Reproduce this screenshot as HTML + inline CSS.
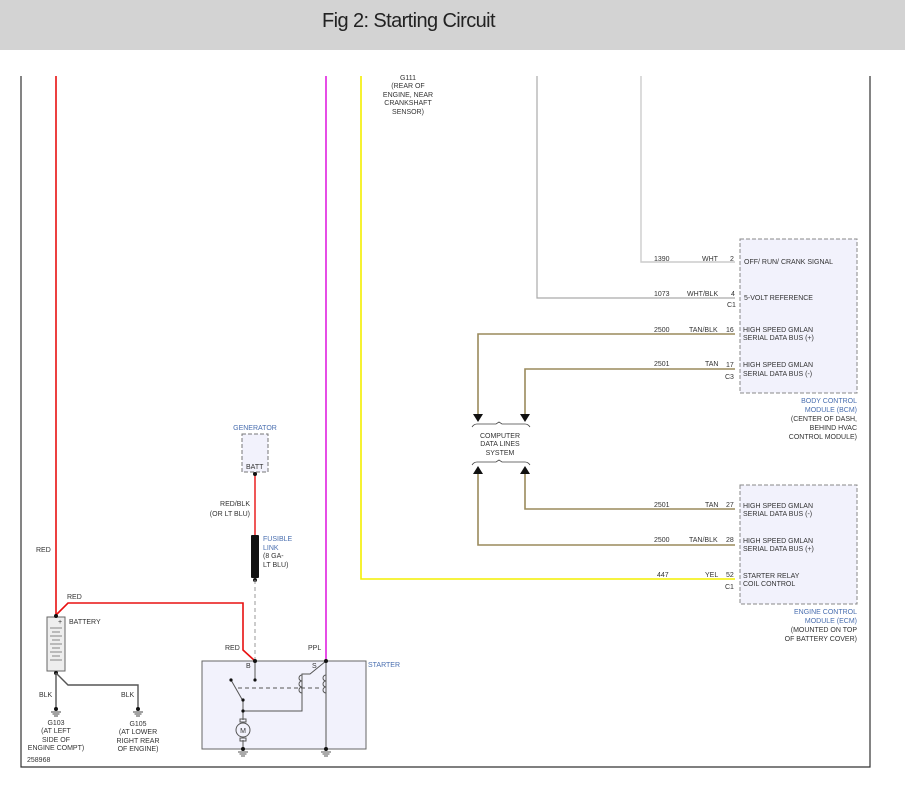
<!DOCTYPE html>
<html><head><meta charset="utf-8"><style>
html,body{margin:0;padding:0;background:#fff;width:905px;height:789px;overflow:hidden}
.hdr{position:absolute;left:0;top:0;width:905px;height:50px;background:#d3d3d3}
.hdr span{position:absolute;left:322px;top:10px;font:20px "Liberation Sans",sans-serif;color:#222;letter-spacing:-0.6px}
svg{position:absolute;left:0;top:0}
text{font-family:"Liberation Sans",sans-serif;font-size:7px;fill:#333}
.b{fill:#4a6fb0}
</style></head><body>
<div class="hdr"><span>Fig 2: Starting Circuit</span></div>
<svg width="905" height="789" viewBox="0 0 905 789">
<path d="M21 76V767H870V76" fill="none" stroke="#333" stroke-width="1.2"/>
<path d="M56 76V617" stroke="#e81010" stroke-width="1.6" fill="none"/>
<path d="M326 76V661" stroke="#e020e0" stroke-width="1.6" fill="none"/>
<path d="M361 76V579H735" stroke="#f4ef00" stroke-width="1.6" fill="none"/>
<path d="M641 76V262H735" stroke="#ccc" stroke-width="1.4" fill="none"/>
<path d="M537 76V298H735" stroke="#aaa" stroke-width="1.2" fill="none"/>
<path d="M478 420V334H735M525 420V369H735M525 468V509H735M478 468V545H735" stroke="#9a8a5c" stroke-width="1.6" fill="none"/>
<path d="M473 414h10l-5 8zM520 414h10l-5 8zM473 474h10l-5-8zM520 474h10l-5-8z" fill="#111"/>
<path d="M472 427q2-3 5-3h19l3-2 3 2h23q3 0 5 3M472 465q2-3 5-3h19l3-2 3 2h23q3 0 5 3" stroke="#444" fill="none" stroke-width="0.8"/>
<text x="500" y="438" text-anchor="middle">COMPUTER</text>
<text x="500" y="446" text-anchor="middle">DATA LINES</text>
<text x="500" y="455" text-anchor="middle">SYSTEM</text>
<g text-anchor="middle"><text x="408" y="80">G111</text><text x="408" y="88">(REAR OF</text><text x="408" y="97">ENGINE, NEAR</text><text x="408" y="105">CRANKSHAFT</text><text x="408" y="114">SENSOR)</text></g>
<rect x="740" y="239" width="117" height="154" fill="#f2f2fc" stroke="#888" stroke-dasharray="4 2"/>
<rect x="740" y="485" width="117" height="119" fill="#f2f2fc" stroke="#888" stroke-dasharray="4 2"/>
<g>
<text x="654" y="261">1390</text><text x="702" y="261">WHT</text><text x="730" y="261">2</text><text x="744" y="264">OFF/ RUN/ CRANK SIGNAL</text>
<text x="654" y="296">1073</text><text x="687" y="296">WHT/BLK</text><text x="731" y="296">4</text><text x="727" y="307">C1</text><text x="744" y="300">5-VOLT REFERENCE</text>
<text x="654" y="332">2500</text><text x="689" y="332">TAN/BLK</text><text x="726" y="332">16</text><text x="743" y="332">HIGH SPEED GMLAN</text><text x="743" y="340">SERIAL DATA BUS (+)</text>
<text x="654" y="366">2501</text><text x="705" y="366">TAN</text><text x="726" y="367">17</text><text x="725" y="379">C3</text><text x="743" y="367">HIGH SPEED GMLAN</text><text x="743" y="376">SERIAL DATA BUS (-)</text>
<text x="654" y="507">2501</text><text x="705" y="507">TAN</text><text x="726" y="507">27</text><text x="743" y="508">HIGH SPEED GMLAN</text><text x="743" y="516">SERIAL DATA BUS (-)</text>
<text x="654" y="542">2500</text><text x="689" y="542">TAN/BLK</text><text x="726" y="542">28</text><text x="743" y="543">HIGH SPEED GMLAN</text><text x="743" y="551">SERIAL DATA BUS (+)</text>
<text x="657" y="577">447</text><text x="705" y="577">YEL</text><text x="726" y="577">52</text><text x="725" y="589">C1</text><text x="743" y="578">STARTER RELAY</text><text x="743" y="586">COIL CONTROL</text>
</g>
<g text-anchor="end">
<text x="857" y="403" class="b">BODY CONTROL</text><text x="857" y="412" class="b">MODULE (BCM)</text><text x="857" y="421">(CENTER OF DASH,</text><text x="857" y="430">BEHIND HVAC</text><text x="857" y="439">CONTROL MODULE)</text>
<text x="857" y="614" class="b">ENGINE CONTROL</text><text x="857" y="623" class="b">MODULE (ECM)</text><text x="857" y="632">(MOUNTED ON TOP</text><text x="857" y="641">OF BATTERY COVER)</text>
</g>
<text x="255" y="430" text-anchor="middle" class="b">GENERATOR</text>
<rect x="242" y="434" width="26" height="38" fill="#f2f2fc" stroke="#777" stroke-dasharray="4 2"/>
<text x="246" y="469">BATT</text>
<path d="M255 474V535" stroke="#e81010" stroke-width="1.4"/>
<circle cx="255" cy="474" r="2" fill="#111"/>
<text x="250" y="506" text-anchor="end">RED/BLK</text><text x="250" y="516" text-anchor="end">(OR LT BLU)</text>
<rect x="251" y="535" width="8" height="43" fill="#111" rx="1"/>
<circle cx="255" cy="580" r="2" fill="#111"/>
<text x="263" y="541" class="b">FUSIBLE</text><text x="263" y="550" class="b">LINK</text><text x="263" y="558">(8 GA-</text><text x="263" y="567">LT BLU)</text>
<path d="M255 580V661" stroke="#999" stroke-dasharray="4 3"/>
<text x="36" y="552">RED</text>
<path d="M56 615L68 603H243V650L255 661" stroke="#e81010" stroke-width="1.6" fill="none"/>
<text x="67" y="599">RED</text>
<rect x="47" y="617" width="18" height="54" fill="#eee" stroke="#666"/>
<path d="M50 628h12M52 632h8M50 636h12M52 640h8M50 644h12M52 648h8M50 652h12M52 656h8M50 660h12" stroke="#666" stroke-width="0.8"/>
<text x="58" y="624" font-size="6">+</text>
<text x="69" y="624">BATTERY</text>
<circle cx="56" cy="616" r="2" fill="#111"/><circle cx="56" cy="673" r="2" fill="#111"/>
<path d="M56 673V708M56 673L68 685H138V708" stroke="#555" stroke-width="1.4" fill="none"/>
<text x="39" y="697">BLK</text><text x="121" y="697">BLK</text>
<g stroke="#444"><path d="M51 712h10M52.5 714h7M54 716h4M133 712h10M134.5 714h7M136 716h4"/></g>
<circle cx="56" cy="709" r="2" fill="#111"/><circle cx="138" cy="709" r="2" fill="#111"/>
<g text-anchor="middle"><text x="56" y="725">G103</text><text x="56" y="733">(AT LEFT</text><text x="56" y="742">SIDE OF</text><text x="56" y="750">ENGINE COMPT)</text>
<text x="138" y="726">G105</text><text x="138" y="734">(AT LOWER</text><text x="138" y="743">RIGHT REAR</text><text x="138" y="751">OF ENGINE)</text></g>
<text x="27" y="762">258968</text>
<text x="225" y="650">RED</text><text x="308" y="650">PPL</text><text x="368" y="667" class="b">STARTER</text>
<rect x="202" y="661" width="164" height="88" fill="#f2f2fc" stroke="#666"/>
<text x="246" y="668">B</text><text x="312" y="668">S</text>
<g stroke="#555" fill="none" stroke-width="1">
<path d="M255 661V681M231 680L243 701M243 701V711H302V674H310L326 661V749"/>
<path d="M238 688H320" stroke-dasharray="4 3"/>
<path d="M302 675a3 3 0 0 0 0 6a3 3 0 0 0 0 6a3 3 0 0 0 0 6M326 675a3 3 0 0 0 0 6a3 3 0 0 0 0 6a3 3 0 0 0 0 6"/>
<path d="M243 711V720M243 740V749"/>
<rect x="240" y="719" width="6" height="3"/><rect x="240" y="738" width="6" height="3"/>
<circle cx="243" cy="730" r="7"/>
<path d="M238 752h10M239.5 754h7M241 756h4M321 752h10M322.5 754h7M324 756h4"/>
</g>
<text x="243" y="733" text-anchor="middle" font-size="8" fill="#222">M</text>
<g fill="#111"><circle cx="255" cy="661" r="2"/><circle cx="326" cy="661" r="2"/><circle cx="255" cy="680" r="1.6"/><circle cx="231" cy="680" r="1.6"/><circle cx="243" cy="700" r="1.6"/><circle cx="243" cy="711" r="1.6"/><circle cx="243" cy="749" r="2"/><circle cx="326" cy="749" r="2"/></g>
</svg>
</body></html>
